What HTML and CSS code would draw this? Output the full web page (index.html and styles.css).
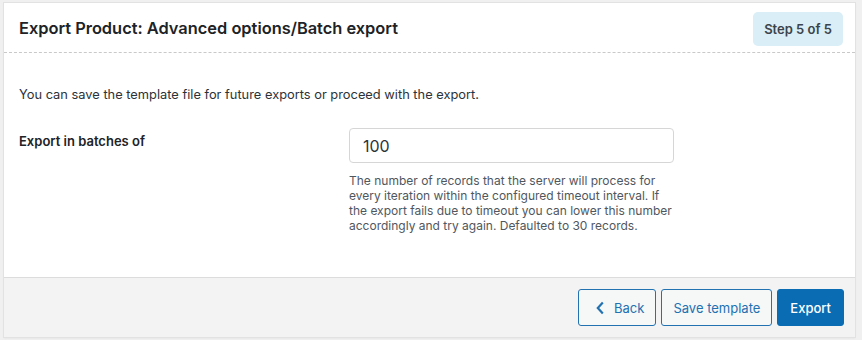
FILE: index.html
```html
<!DOCTYPE html>
<html>
<head>
<meta charset="utf-8">
<link rel="stylesheet" href="styles.css">
</head>
<body>
<div class="panel">
  <div class="header">
    <h2 class="title">Export Product: Advanced options/Batch export</h2>
    <div class="step">Step 5 of 5</div>
  </div>
  <div class="body">
    <p class="intro">You can save the template file for future exports or proceed with the export.</p>
    <div class="row">
      <label class="label">Export in batches of</label>
      <div class="field">
        <input class="input" type="text" value="100">
        <p class="desc">The number of records that the server will process for every iteration within the configured timeout interval. If the export fails due to timeout you can lower this number accordingly and try again. Defaulted to 30 records.</p>
      </div>
    </div>
  </div>
  <div class="footer">
    <button class="btn btn-secondary btn-back"><svg class="chev" width="8" height="14" viewBox="0 0 8 14"><path d="M6.8 1.5 L1.8 7 L6.8 12.5" fill="none" stroke="currentColor" stroke-width="2.2"/></svg>Back</button>
    <button class="btn btn-secondary">Save template</button>
    <button class="btn btn-primary">Export</button>
  </div>
</div>
</body>
</html>
```
FILE: styles.css
```css
* { box-sizing: border-box; }
html, body { margin: 0; padding: 0; }
body {
  background: #f0f0f1;
  font-family: Inter, "Liberation Sans", sans-serif;
  color: #1d2327;
  padding: 3px 7px 3px 4px;
}
.panel {
  background: #fff;
  width: 851px;
  height: 334px;
  box-shadow: 0 0 0 1px #e2e2e2, 0 1px 2px rgba(0,0,0,0.08);
  display: flex;
  flex-direction: column;
}
.header {
  display: flex;
  justify-content: space-between;
  align-items: flex-start;
  height: 50px;
  border-bottom: 1px dashed #c9c9c9;
  padding: 9px 12px 0 15px;
}
.title {
  margin: 6px 0 0;
  font-size: 16.4px;
  font-weight: 600;
  color: #1d2327;
}
.step {
  background: #d9eef6;
  border-radius: 5px;
  height: 34px;
  line-height: 34px;
  padding: 0 11px;
  font-size: 13px;
  font-weight: 600;
  color: #3c434a;
}
.body {
  flex: 1;
  padding: 33px 15px 0;
}
.intro {
  margin: 0;
  font-size: 12.85px;
  line-height: 18px;
  color: #2c3338;
}
.row {
  display: grid;
  grid-template-columns: 330px 325px;
  margin-top: 24px;
}
.label {
  font-size: 13px;
  font-weight: 600;
  color: #1d2327;
  padding-top: 5px;
}
.input {
  width: 325px;
  height: 35px;
  border: 1px solid #d6d6d6;
  border-radius: 4px;
  padding: 0 13px;
  font-family: inherit;
  font-size: 16px;
  color: #2c3338;
  display: block;
}
.desc {
  margin: 10px 0 0;
  font-size: 12px;
  line-height: 15px;
  color: #50575e;
}
.footer {
  height: 60px;
  background: #f3f3f3;
  border-top: 1px solid #dcdcdc;
  display: flex;
  justify-content: flex-end;
  align-items: flex-start;
  gap: 5px;
  padding: 11px 11px 0 0;
}
.btn {
  height: 37px;
  border-radius: 3px;
  font-family: inherit;
  font-size: 13px;
  padding: 0 11px;
  display: flex;
  align-items: center;
  cursor: pointer;
}
.btn-secondary {
  background: #f6f7f7;
  border: 1px solid #2271b1;
  color: #2271b1;
}
.btn-primary {
  background: #0a6db4;
  border: 1px solid #0a6db4;
  color: #fff;
  font-weight: 500;
  padding: 0 12px;
}
.btn-back { padding-left: 17px; }
.chev { margin-right: 10px; }
```
